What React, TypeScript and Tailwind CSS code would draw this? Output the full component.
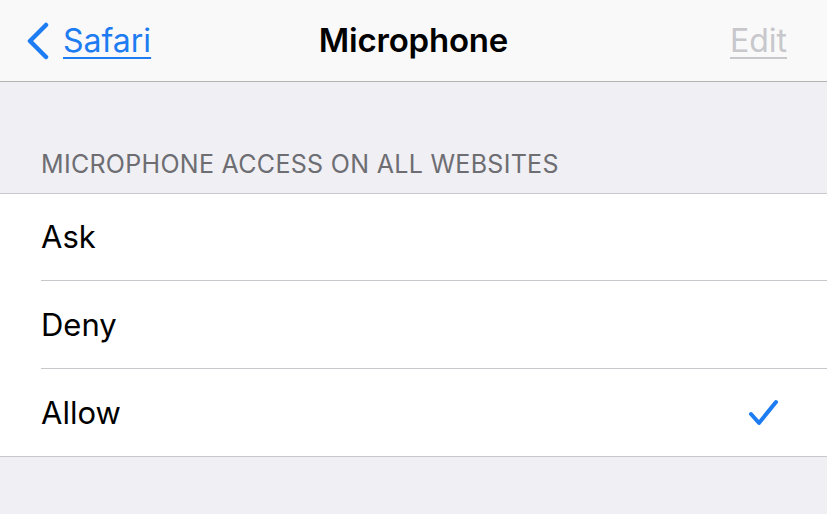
export default function App() {
  return (
    <div className="w-[827px] h-[514px] bg-[#efeff4] overflow-hidden" style={{ fontFamily: "Inter, 'Noto Sans', sans-serif" }}>
      <div className="h-[82px] bg-[#f9f9f9] border-b border-[#b2b2b2] flex items-center relative">
        <div className="flex items-center pl-[26px] text-[#1d7cf2]">
          <svg width="24" height="38" viewBox="0 0 24 38" className="mr-[13px]">
            <path d="M20 3 L4 19 L20 35" fill="none" stroke="#1d7cf2" strokeWidth="4.5" strokeLinecap="round" strokeLinejoin="round" />
          </svg>
          <span className="text-[32px] underline decoration-[2px] underline-offset-[5px]">Safari</span>
        </div>
        <div className="absolute left-0 right-0 text-center text-[33px] font-semibold text-black tracking-[-0.2px] pointer-events-none">Microphone</div>
        <div className="ml-auto pr-[40px] text-[32px] text-[#c7c7cc] underline decoration-[2px] underline-offset-[5px]">Edit</div>
      </div>
      <div className="h-[111px] flex items-end pl-[41px] pb-[10px]">
        <span className="text-[25px] text-[#6d6d72] tracking-[0.3px]">MICROPHONE ACCESS ON ALL WEBSITES</span>
      </div>
      <div className="bg-white border-t border-b border-[#c8c7cc]">
        <div className="pl-[41px]">
          <div className="h-[87px] flex items-center pt-[1px] text-[31px] text-black border-b border-[#c8c7cc]">Ask</div>
          <div className="h-[88px] flex items-center pt-[1px] text-[31px] text-black border-b border-[#c8c7cc]">Deny</div>
          <div className="h-[87px] flex items-center pt-[1px] text-[31px] text-black pr-[47px]">
            <span>Allow</span>
            <svg width="32" height="30" viewBox="0 0 32 30" className="ml-auto">
              <path d="M3 16 L11 25 L28 4" fill="none" stroke="#1d7cf2" strokeWidth="4" strokeLinecap="round" strokeLinejoin="round" />
            </svg>
          </div>
        </div>
      </div>
    </div>
  );
}
